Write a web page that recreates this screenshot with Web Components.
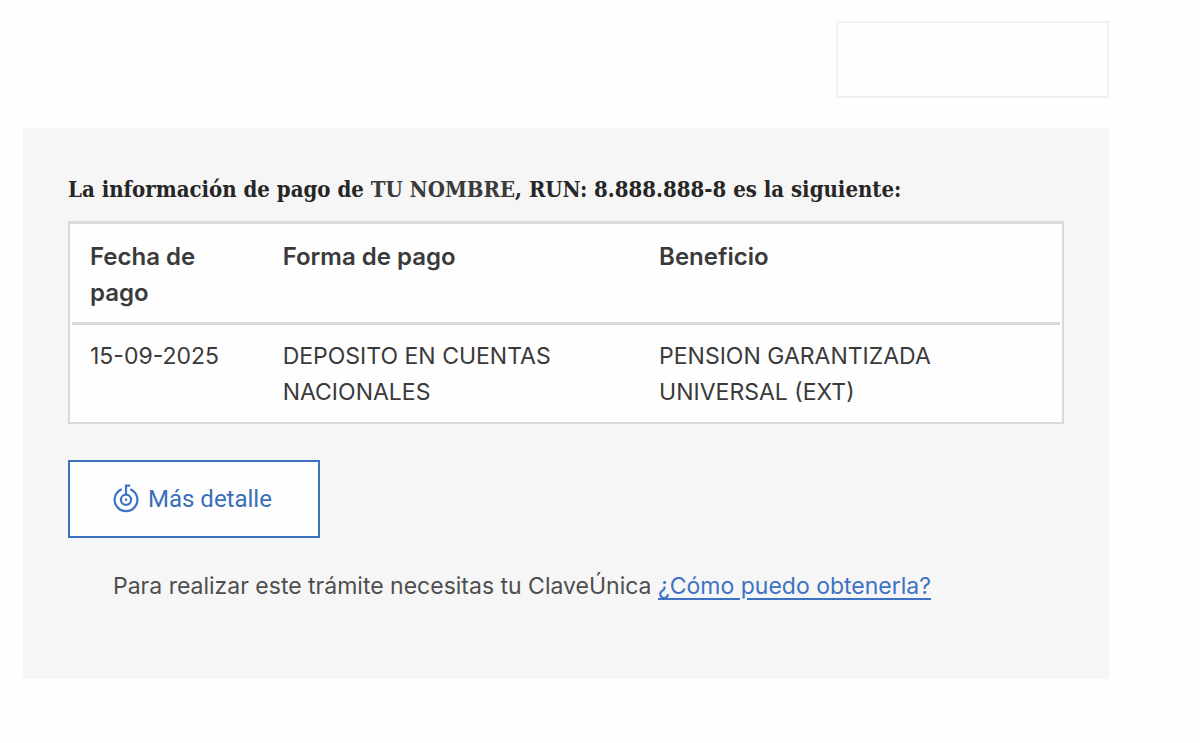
<!DOCTYPE html>
<html lang="es">
<head>
<meta charset="utf-8">
<title>Información de pago</title>
<style>
  body { margin: 0; background: #fefefe; color: #3a3a3a; font-family: Inter, sans-serif; font-size: 24px; line-height: 36px; }
  b { color: #3a3a3a; }
</style>
</head>
<body>
<payment-page>
  <payment-panel>
    <span slot="title">La información de pago de <b>TU NOMBRE</b>, RUN: 8.888.888-8 es la siguiente:</span>
    <payment-table></payment-table>
    <clave-button>Más detalle</clave-button>
    <clave-help href="#obtener">
      Para realizar este trámite necesitas tu ClaveÚnica
      <span slot="link">¿Cómo puedo obtenerla?</span>
    </clave-help>
  </payment-panel>
</payment-page>
<script>
const define = (name, html, setup) => customElements.define(name, class extends HTMLElement {
  constructor() {
    super();
    this.attachShadow({ mode: "open" }).innerHTML = html;
  }
  connectedCallback() { if (setup) setup(this); }
});

define("payment-page", `
  <style>
    :host { display: flex; flex-direction: column; gap: 30px; padding: 21px 91px 64px 23px; }
    .frame { align-self: flex-end; box-sizing: border-box; width: 273px; height: 77px; border: 2px solid #f1f1f1; background: #fefefe; }
  </style>
  <div class="frame"></div>
  <slot></slot>`);

define("payment-panel", `
  <style>
    :host { display: flex; flex-direction: column; align-items: flex-start; background: #f6f6f6; padding: 43px 45px 75px; }
    h2 { margin: 0 0 14px; font: bold 22px/36px "DejaVu Serif Condensed", "DejaVu Serif", serif; color: #262626; }
    ::slotted(payment-table) { align-self: stretch; margin-bottom: 36px; }
    ::slotted(clave-help) { margin: 30px 0 0 45px; }
  </style>
  <h2><slot name="title"></slot></h2>
  <slot></slot>`);

define("payment-table", `
  <style>
    :host { display: block; border: 2px solid #dadada; border-top-width: 3px; background: #fefefe; padding: 0 2px; }
    table { width: 100%; border-collapse: collapse; table-layout: fixed; }
    th, td { padding: 13px 72px 12px 18px; text-align: left; vertical-align: top; }
    th { padding-top: 15px; padding-bottom: 11px; font-weight: 600; border-bottom: 3px solid #dadada; }
    td { font-size: 23px; font-weight: 400; }
    .date { width: 19.5%; padding-right: 36px; box-sizing: border-box; }
    .method { width: 38.1%; box-sizing: border-box; }
  </style>
  <table>
    <thead><tr><th class="date" scope="col">Fecha de pago</th><th class="method" scope="col">Forma de pago</th><th scope="col">Beneficio</th></tr></thead>
    <tbody><tr><td class="date">15-09-2025</td><td class="method">DEPOSITO EN CUENTAS NACIONALES</td><td>PENSION GARANTIZADA UNIVERSAL (EXT)</td></tr></tbody>
  </table>`);

define("clave-button", `
  <style>
    :host { display: block; }
    button { display: flex; align-items: center; gap: 8px; padding: 19px 46px 19px 42px; border: 2px solid #3a72bd; background: #fefefe; color: #3a6fb8; font: 24px/36px Roboto, sans-serif; cursor: pointer; }
    svg { display: block; }
  </style>
  <button type="button">
    <svg width="28" height="30" viewBox="0 0 28 30" fill="none" stroke="#3d74c6" stroke-width="2.2" aria-hidden="true">
      <path d="M9.8 5.2A11.4 11.4 0 1 0 18.2 5.2"/>
      <circle cx="14" cy="15.8" r="5.1"/>
      <path d="M14 10.7V1.6H18.2"/>
      <circle cx="14" cy="15.8" r="1.3" fill="#3d74c6" stroke="none"/>
    </svg>
    <slot></slot>
  </button>`);

define("clave-help", `
  <style>
    :host { display: block; color: #4e4e4e; font-size: 23px; }
    p { margin: 0; }
    a { color: #3d72c4; text-decoration: underline; text-decoration-thickness: 2px; text-underline-offset: 4px; }
  </style>
  <p><slot></slot><a><slot name="link"></slot></a></p>`,
  el => el.shadowRoot.querySelector("a").setAttribute("href", el.getAttribute("href")));
</script>
</body>
</html>
